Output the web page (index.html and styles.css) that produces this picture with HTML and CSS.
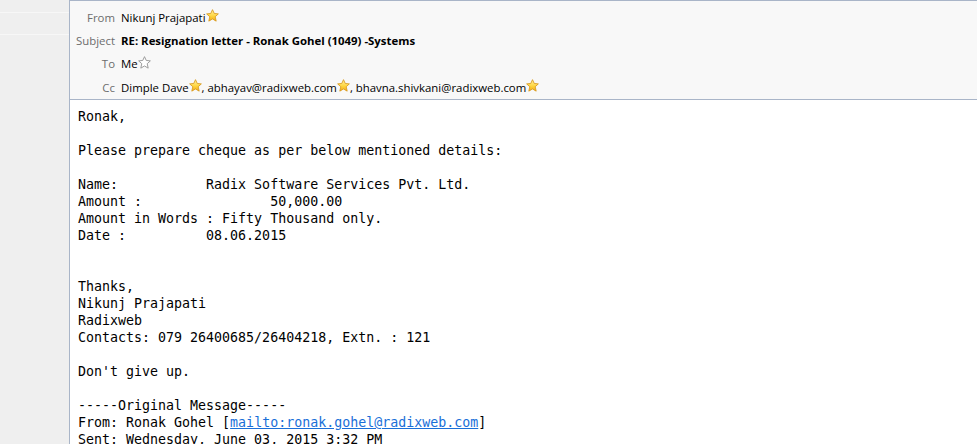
FILE: index.html
```html
<!DOCTYPE html>
<html>
<head>
<meta charset="utf-8">
<link rel="stylesheet" href="styles.css">
</head>
<body>
<div class="app">
  <aside class="sidebar">
    <div class="side-band side-band-a"></div>
    <div class="side-band side-band-b"></div>
  </aside>
  <main class="message">
    <header class="headers">
      <div class="hrow"><span class="label">From</span><span class="value">Nikunj Prajapati<svg class="star" viewBox="0 0 12 12"><defs><linearGradient id="g1" x1="0" y1="0" x2="0" y2="1"><stop offset="0" stop-color="#fff2a8"/><stop offset="0.55" stop-color="#ffd640"/><stop offset="1" stop-color="#f0a818"/></linearGradient></defs><path d="M6 0.6 L7.6 4.1 L11.4 4.5 L8.5 7.1 L9.4 11.2 L6 9.2 L2.6 11.2 L3.5 7.1 L0.6 4.5 L4.4 4.1 Z" fill="url(#g1)" stroke="#d99a1e" stroke-width="0.8" stroke-linejoin="round"/></svg></span></div>
      <div class="hrow"><span class="label">Subject</span><span class="value subject">RE: Resignation letter - Ronak Gohel (1049) -Systems</span></div>
      <div class="hrow"><span class="label">To</span><span class="value">Me<svg class="star" viewBox="0 0 12 12"><path d="M6 0.6 L7.6 4.1 L11.4 4.5 L8.5 7.1 L9.4 11.2 L6 9.2 L2.6 11.2 L3.5 7.1 L0.6 4.5 L4.4 4.1 Z" fill="#ffffff" stroke="#9a9a9a" stroke-width="0.9" stroke-linejoin="round"/></svg></span></div>
      <div class="hrow"><span class="label">Cc</span><span class="value">Dimple Dave<svg class="star" viewBox="0 0 12 12"><path d="M6 0.6 L7.6 4.1 L11.4 4.5 L8.5 7.1 L9.4 11.2 L6 9.2 L2.6 11.2 L3.5 7.1 L0.6 4.5 L4.4 4.1 Z" fill="url(#g1)" stroke="#d99a1e" stroke-width="0.8" stroke-linejoin="round"/></svg>, abhayav@radixweb.com<svg class="star" viewBox="0 0 12 12"><path d="M6 0.6 L7.6 4.1 L11.4 4.5 L8.5 7.1 L9.4 11.2 L6 9.2 L2.6 11.2 L3.5 7.1 L0.6 4.5 L4.4 4.1 Z" fill="url(#g1)" stroke="#d99a1e" stroke-width="0.8" stroke-linejoin="round"/></svg>, bhavna.shivkani@radixweb.com<svg class="star" viewBox="0 0 12 12"><path d="M6 0.6 L7.6 4.1 L11.4 4.5 L8.5 7.1 L9.4 11.2 L6 9.2 L2.6 11.2 L3.5 7.1 L0.6 4.5 L4.4 4.1 Z" fill="url(#g1)" stroke="#d99a1e" stroke-width="0.8" stroke-linejoin="round"/></svg></span></div>
    </header>
    <section class="content">
<pre class="mail">Ronak,

Please prepare cheque as per below mentioned details:

Name:           Radix Software Services Pvt. Ltd.
Amount :                50,000.00
Amount in Words : Fifty Thousand only.
Date :          08.06.2015


Thanks,
Nikunj Prajapati
Radixweb
Contacts: 079 26400685/26404218, Extn. : 121

Don't give up.

-----Original Message-----
From: Ronak Gohel [<a class="mailto" href="#">mailto:ronak.gohel@radixweb.com</a>]
Sent: Wednesday, June 03, 2015 3:32 PM</pre>
    </section>
  </main>
</div>
</body>
</html>
```

FILE: styles.css
```css
html, body {
  margin: 0;
  padding: 0;
  height: 444px;
  overflow: hidden;
  background: #ffffff;
}

.app {
  display: flex;
  height: 444px;
}

.sidebar {
  width: 69px;
  flex: none;
  background: #efefef;
  display: flex;
  flex-direction: column;
}

.side-band {
  border-bottom: 1px solid #f7f7f7;
}

.side-band-a { height: 12px; }
.side-band-b { height: 21px; }

.message {
  flex: 1;
  border-left: 1px solid #a9b5c8;
  display: flex;
  flex-direction: column;
  min-width: 0;
}

.headers {
  box-sizing: content-box;
  border-top: 1px solid #a9b5c8;
  border-bottom: 1px solid #a9b5c8;
  background: #f8f8f8;
  display: flex;
  flex-direction: column;
  padding-top: 4.5px;
  height: 93.5px;
  font-family: "Open Sans", "Noto Sans", sans-serif;
  font-size: 11.4px;
}

.hrow {
  height: 23.5px;
  display: flex;
  align-items: center;
  white-space: nowrap;
}

.label {
  width: 45px;
  text-align: right;
  color: #6d6d6d;
  flex: none;
}

.value {
  margin-left: 6px;
  color: #000000;
  display: flex;
  align-items: center;
}

.subject {
  font-weight: bold;
}

.star {
  width: 13px;
  height: 13px;
  flex: none;
  margin-top: -3px;
}

.content {
  flex: 1;
  padding: 8px 8px 0 8px;
  overflow: hidden;
}

.mail {
  margin: 0;
  font-family: "DejaVu Sans Mono", "Liberation Mono", monospace;
  font-size: 13.3px;
  line-height: 17px;
  color: #000000;
}

.mailto {
  color: #1a6fd8;
  text-decoration: underline;
}
```
